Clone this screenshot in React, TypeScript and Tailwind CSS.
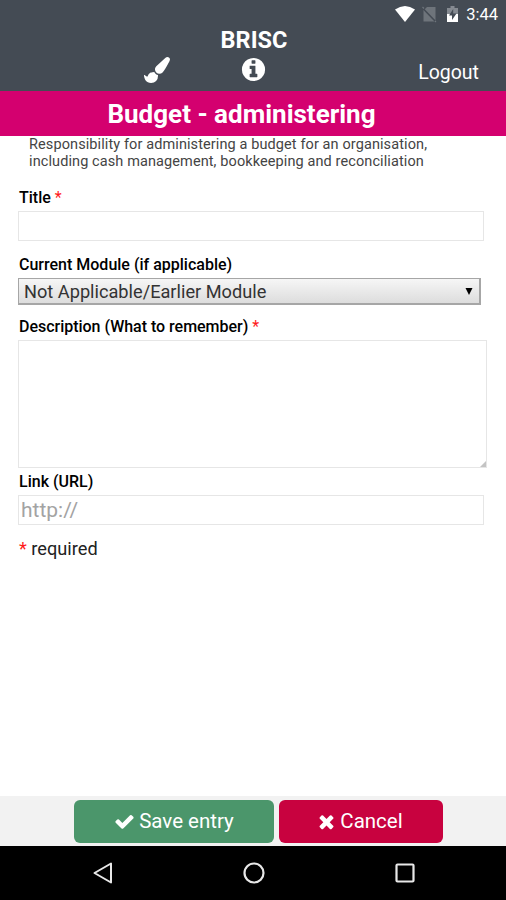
import { useState } from "react";

type IconProps = {
  d: string;
  className?: string;
};

function Icon({ d, className = "" }: IconProps) {
  return (
    <svg viewBox="0 0 1792 1792" fill="currentColor" className={className} aria-hidden="true">
      <path d={d} />
    </svg>
  );
}

const BRUSH =
  "M1615 0q70 0 122.5 46.5t52.5 116.5q0 63-45 151-332 629-465 752-97 91-218 91-126 0-216.5-92.5t-90.5-219.5q0-128 92-212l638-579q59-54 130-54zm-909 1034q39 76 106.5 130t150.5 76l1 71q4 213-129.5 347t-348.5 134q-123 0-218-46.5t-152.5-127.5-86.5-183-29-220q7 5 41 30t62 44.5 59 36.5 46 17q41 0 55-37 25-66 57.5-112.5t69.5-76 88-47.5 103-25.5 125-10.5z";
const INFO =
  "M1152 1376v-160q0-14-9-23t-23-9h-96v-512q0-14-9-23t-23-9h-320q-14 0-23 9t-9 23v160q0 14 9 23t23 9h96v320h-96q-14 0-23 9t-9 23v160q0 14 9 23t23 9h448q14 0 23-9t9-23zm-128-896v-160q0-14-9-23t-23-9h-192q-14 0-23 9t-9 23v160q0 14 9 23t23 9h192q14 0 23-9t9-23zm640 416q0 209-103 385.5t-279.5 279.5-385.5 103-385.5-103-279.5-279.5-103-385.5 103-385.5 279.5-279.5 385.5-103 385.5 103 279.5 279.5 103 385.5z";
const CHECK =
  "M1671 566q0 40-28 68l-724 724-136 136q-28 28-68 28t-68-28l-136-136-362-362q-28-28-28-68t28-68l136-136q28-28 68-28t68 28l294 295 656-657q28-28 68-28t68 28l136 136q28 28 28 68z";
const TIMES =
  "M1490 1322q0 40-28 68l-136 136q-28 28-68 28t-68-28l-294-294-294 294q-28 28-68 28t-68-28l-136-136q-28-28-28-68t28-68l294-294-294-294q-28-28-28-68t28-68l136-136q28-28 68-28t68 28l294 294 294-294q28-28 68-28t68 28l136 136q28 28 28 68t-28 68l-294 294 294 294q28 28 28 68z";

function StatusBar() {
  return (
    <div className="flex h-7 items-center justify-end pr-2 text-white">
      <svg width="22" height="18" viewBox="0 0 22 18" className="mr-1.5" aria-hidden="true">
        <path d="M2 4.500Q12-2.500 22 4.500L12 17z" fill="currentColor" />
      </svg>
      <svg width="16" height="18" viewBox="0 0 16 18" className="mr-[9px]" aria-hidden="true">
        <path d="M6 2h8.500v14.500H2.500V5.500z" fill="#6e747b" />
        <path d="M2 3.500l13 13.500" stroke="#444b54" strokeWidth="1.600" />
        <path d="M1.500 2L3 3.500M14 16l1 1" stroke="#6e747b" strokeWidth="1.200" />
      </svg>
      <svg width="12" height="18" viewBox="0 0 12 18" className="mr-2" aria-hidden="true">
        <path d="M1 3h3.500V1h4v2H12v6H1z" fill="#858a91" />
        <path d="M1 9h11v8H1z" fill="currentColor" />
        <path d="M7.200 4L3 10.500h3V15l4.500-6.500H7.200z" fill="#444b54" />
      </svg>
      <span className="pt-0.5 text-[16.500px] leading-none">3:44</span>
    </div>
  );
}

function Header() {
  return (
    <header className="h-[91px] bg-[#444b54] text-white">
      <StatusBar />
      <h1 className="pb-px pl-0.5 text-center text-[23.500px] leading-6 font-bold">BRISC</h1>
      <div className="grid grid-cols-[144px_96px_1fr_auto] items-start pr-[27px]">
        <span />
        <Icon d={BRUSH} className="mt-1 size-[26px]" />
        <Icon d={INFO} className="mt-[3px] size-[27px]" />
        <a className="mt-2 text-[19.500px] leading-6">Logout</a>
      </div>
    </header>
  );
}

function Required() {
  return <span className="font-normal text-[#ff1a1a]">*</span>;
}

function EntryForm() {
  const [title, setTitle] = useState("");
  const [description, setDescription] = useState("");
  const [link, setLink] = useState("");

  return (
    <form className="flex flex-1 flex-col pl-[18px] text-black">
      <p className="pl-[11px] text-[14.500px] leading-[17px] tracking-[0.1px] text-[#444]">
        Responsibility for administering a budget for an organisation,
        <br />
        including cash management, bookkeeping and reconciliation
      </p>

      <label htmlFor="title" className="mt-[18px] pl-px text-base leading-5 font-medium">
        Title <Required />
      </label>
      <input
        id="title"
        value={title}
        onChange={(e) => setTitle(e.target.value)}
        className="mt-[3px] h-[30px] w-[466px] border border-[#e6e6e6] px-1 text-xl outline-none"
      />

      <label htmlFor="module" className="mt-3.5 pl-px text-base leading-5 font-medium">
        Current Module (if applicable)
      </label>
      <button
        id="module"
        type="button"
        className="mt-[3px] flex h-[27px] w-[463px] items-center justify-between border border-r-2 border-b-2 border-[#a6a6a6] bg-linear-to-b from-[#f6f6f6] to-[#dddddd] pt-0.5 pr-1.5 pl-[5px] text-[18.200px] leading-none text-[#333]"
      >
        Not Applicable/Earlier Module
        <svg width="8" height="7" viewBox="0 0 8 7" className="-mt-0.5" aria-hidden="true">
          <path d="M0.500 0h7L4 7z" fill="#000" />
        </svg>
      </button>

      <label htmlFor="description" className="mt-3 pl-px text-base leading-5 font-medium tracking-[-0.02px]">
        Description (What to remember) <Required />
      </label>
      <div className="relative mt-[3px] h-[128px] w-[469px]">
        <textarea
          id="description"
          value={description}
          onChange={(e) => setDescription(e.target.value)}
          className="block size-full resize-none border border-[#e6e6e6] px-1 text-xl outline-none"
        />
        <svg width="6" height="6" viewBox="0 0 6 6" className="absolute right-px bottom-px" aria-hidden="true">
          <path d="M6 0v6H0z" fill="#c4c4c4" />
        </svg>
      </div>

      <label htmlFor="link" className="mt-1 pl-px text-base leading-5 font-medium">
        Link (URL)
      </label>
      <input
        id="link"
        value={link}
        placeholder="http://"
        onChange={(e) => setLink(e.target.value)}
        className="mt-[3px] h-[30px] w-[466px] border border-[#e6e6e6] px-0.5 pt-0.5 text-[21px] outline-none placeholder:text-[#a3a3a3]"
      />

      <p className="mt-3 pl-px text-[18.200px] leading-6 text-[#222]">
        <Required /> required
      </p>
    </form>
  );
}

function Actions() {
  return (
    <div className="flex h-[50px] gap-[5px] bg-[#f2f2f2] pt-1 pl-[74px] text-[20.500px] text-white">
      <button className="flex h-[43px] w-[200px] items-center justify-center gap-1 rounded-md bg-[#4b966b]">
        <Icon d={CHECK} className="size-[21px]" />
        Save entry
      </button>
      <button className="flex h-[43px] w-[164px] items-center justify-center gap-[3px] rounded-md bg-[#c8023f] pr-[3px]">
        <Icon d={TIMES} className="size-[21px]" />
        Cancel
      </button>
    </div>
  );
}

function NavBar() {
  return (
    <nav className="flex h-[54px] items-center justify-between bg-black pr-[89px] pl-[91px] text-[#e8e8e8]">
      <svg width="24" height="24" viewBox="0 0 24 24" fill="none" stroke="currentColor" strokeWidth="2" aria-hidden="true">
        <path d="M20 2.500v19L3.500 12z" strokeLinejoin="round" />
      </svg>
      <svg width="24" height="24" viewBox="0 0 24 24" fill="none" stroke="currentColor" strokeWidth="2.200" aria-hidden="true">
        <circle cx="12" cy="12" r="9.500" />
      </svg>
      <svg width="24" height="24" viewBox="0 0 24 24" fill="none" stroke="currentColor" strokeWidth="2.200" aria-hidden="true">
        <rect x="3.500" y="3.500" width="17" height="17" rx="1" />
      </svg>
    </nav>
  );
}

export default function App() {
  return (
    <div className="flex h-[900px] w-[506px] flex-col overflow-hidden bg-white font-['Roboto',sans-serif]">
      <Header />
      <h2 className="h-[45px] bg-[#d4006f] pr-[23px] text-center text-[26px] leading-[46px] font-bold text-white">
        Budget - administering
      </h2>
      <EntryForm />
      <Actions />
      <NavBar />
    </div>
  );
}
